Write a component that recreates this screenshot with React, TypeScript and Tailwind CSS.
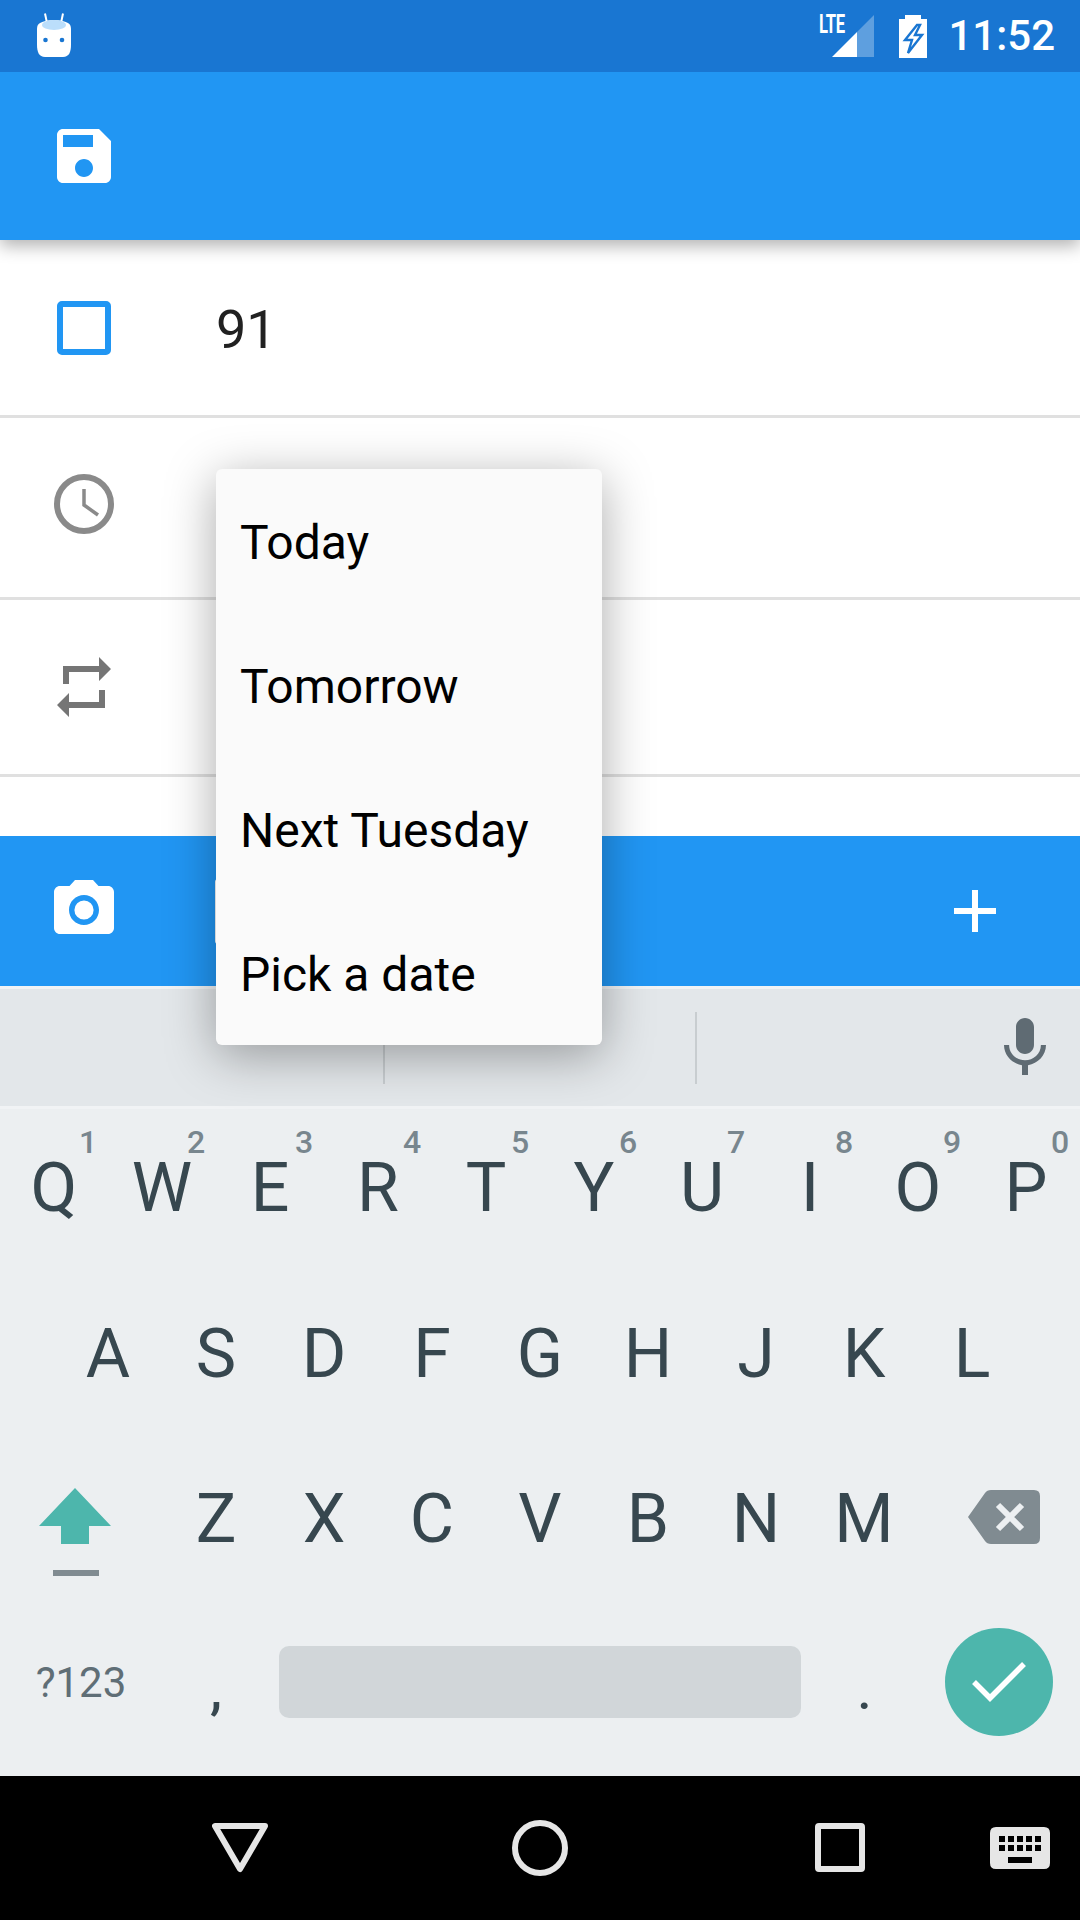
import React from 'react';

const topRow = [
  ['Q', '1'], ['W', '2'], ['E', '3'], ['R', '4'], ['T', '5'],
  ['Y', '6'], ['U', '7'], ['I', '8'], ['O', '9'], ['P', '0'],
];
const homeRow = ['A', 'S', 'D', 'F', 'G', 'H', 'J', 'K', 'L'];
const bottomRow = ['Z', 'X', 'C', 'V', 'B', 'N', 'M'];
const menuItems = ['Today', 'Tomorrow', 'Next Tuesday', 'Pick a date'];

function StatusBar() {
  return (
    <div className="relative z-20 flex h-[72px] items-center bg-[#1976D2] text-white">
      {/* Bot notification icon */}
      <svg width="34" height="44" viewBox="0 0 34 44" className="ml-[37px] mt-[-2px]">
        <path d="M8 0.5 L10 10 M26 0.5 L24 10" stroke="#fff" strokeWidth="2" />
        <path d="M3 10 C10 6 24 6 31 10 C34 12 34 14 34 18 L34 32 C34 39 32 44 26 44 L8 44 C2 44 0 39 0 32 L0 18 C0 14 0 12 3 10 Z" fill="#fff" />
        <ellipse cx="17" cy="12" rx="12" ry="5" fill="#BBDEFB" />
        <circle cx="8.5" cy="27" r="2.3" fill="#1976D2" />
        <circle cx="25" cy="27" r="2.3" fill="#1976D2" />
      </svg>
      <div className="ml-auto flex items-center">
        <div className="relative h-[72px] w-[55px]">
          <span className="absolute left-0 top-[10px] origin-left scale-x-[0.64] text-[26px] font-bold leading-[28px] tracking-tight">LTE</span>
          <svg width="42" height="42" viewBox="0 0 42 42" className="absolute left-[13px] top-[15px]">
            <path d="M25 17 L42 0 L42 42 L25 42 Z" fill="#fff" fillOpacity="0.3" />
            <path d="M0 42 L25 17 L25 42 Z" fill="#fff" />
          </svg>
        </div>
        <svg width="28" height="43" viewBox="0 0 28 43" className="ml-[25px]">
          <path d="M6 0 H22 V4 H28 V43 H0 V4 H6 Z" fill="#fff" />
          <path d="M18 10 L6 25 L13 25 L9 38 L23 20 L16 20 L21 10 Z" fill="#fff" stroke="#1976D2" strokeWidth="2.4" />
        </svg>
        <span className="ml-[21px] mr-[25px] text-[42px] font-medium leading-[72px]">11:52</span>
      </div>
    </div>
  );
}

function FormRow({ icon, children, height }: { icon: React.ReactNode; children?: React.ReactNode; height: string }) {
  return (
    <div className={`flex items-center border-b-[3px] border-[#E0E0E0] ${height}`}>
      <div className="ml-[48px] h-[72px] w-[72px]">{icon}</div>
      {children}
    </div>
  );
}

function Key({ label, hint }: { label: string; hint?: string }) {
  return (
    <div className="relative flex items-center justify-center pt-[4px] text-[68px] leading-none text-[#37474F]">
      {label}
      {hint && (
        <span className="absolute left-[79px] top-[17px] text-[32px] font-medium leading-none text-[#78868E]">{hint}</span>
      )}
    </div>
  );
}

function Keyboard() {
  return (
    <div className="flex h-[667px] flex-col bg-[#ECEFF1]">
      <div className="grid h-[154px] grid-cols-10">
        {topRow.map(([label, hint]) => (
          <Key key={label} label={label} hint={hint} />
        ))}
      </div>
      <div className="mt-[6px] grid h-[165px] grid-cols-9 px-[54px]">
        {homeRow.map((k) => (
          <Key key={k} label={k} />
        ))}
      </div>
      <div className="flex h-[165px]">
        <div className="relative w-[162px]">
          <svg width="72" height="56" viewBox="0 0 72 56" className="absolute left-[39px] top-[54px]">
            <path d="M36 0 L72 38 L50 38 L50 56 L22 56 L22 38 L0 38 Z" fill="#4DB6AC" />
          </svg>
          <div className="absolute left-[53px] top-[136px] h-[6px] w-[46px] bg-[#808B91]" />
        </div>
        <div className="grid w-[756px] grid-cols-7">
          {bottomRow.map((k) => (
            <Key key={k} label={k} />
          ))}
        </div>
        <div className="flex flex-1 items-center pl-[50px]">
          <svg width="72" height="54" viewBox="0 0 72 54">
            <path d="M0 27 L17 3 Q19 0 23 0 L66 0 Q72 0 72 6 L72 48 Q72 54 66 54 L23 54 Q19 54 17 51 Z" fill="#808B91" />
            <path d="M30 15 L54 39 M54 15 L30 39" stroke="#ECEFF1" strokeWidth="6" />
          </svg>
        </div>
      </div>
      <div className="flex h-[165px] items-center">
        <div className="w-[162px] pt-[2px] text-center text-[42px] leading-none text-[#5F6E76]">?123</div>
        <div className="w-[108px] pt-[16px] text-center text-[54px] font-medium leading-none text-[#37474F]">,</div>
        <div className="ml-[9px] h-[72px] w-[522px] rounded-[10px] bg-[#D1D6D9]" />
        <div className="w-[127px] pt-[20px] text-center text-[50px] font-medium leading-none text-[#37474F]">.</div>
        <div className="ml-[17px] flex h-[108px] w-[108px] items-center justify-center rounded-full bg-[#4DB6AC]">
          <svg width="56" height="44" viewBox="0 0 56 44">
            <path d="M3 22 L19 38 L53 4" fill="none" stroke="#fff" strokeWidth="5.5" />
          </svg>
        </div>
      </div>
    </div>
  );
}

function NavBar() {
  return (
    <div className="relative h-[144px] bg-black">
      <svg width="56" height="50" viewBox="0 0 56 50" className="absolute left-[212px] top-[47px]">
        <path d="M3 3 H53 L28 46 Z" fill="none" stroke="#E6E6E6" strokeWidth="6" strokeLinejoin="round" />
      </svg>
      <div className="absolute left-[512px] top-[44px] h-[56px] w-[56px] rounded-full border-[6px] border-[#E6E6E6]" />
      <div className="absolute left-[815px] top-[47px] h-[49px] w-[50px] rounded-[4px] border-[6px] border-[#E6E6E6]" />
      <svg width="60" height="42" viewBox="0 0 60 42" className="absolute left-[990px] top-[51px]">
        <path
          fillRule="evenodd"
          fill="#E6E6E6"
          d="M6 0 H54 Q60 0 60 6 V36 Q60 42 54 42 H6 Q0 42 0 36 V6 Q0 0 6 0 Z M9 9 V15 H15 V9 Z M18 9 V15 H24 V9 Z M27 9 V15 H33 V9 Z M36 9 V15 H42 V9 Z M45 9 V15 H51 V9 Z M9 18 V24 H15 V18 Z M18 18 V24 H24 V18 Z M27 18 V24 H33 V18 Z M36 18 V24 H42 V18 Z M45 18 V24 H51 V18 Z M18 30 V36 H42 V30 Z"
        />
      </svg>
    </div>
  );
}

export default function App() {
  return (
    <div className="relative flex h-[1920px] w-[1080px] flex-col overflow-hidden bg-white font-['Roboto',sans-serif]">
      <StatusBar />

      {/* Toolbar */}
      <div className="relative z-10 flex h-[168px] items-center bg-[#2196F3] pl-[48px] shadow-[0_6px_16px_rgba(0,0,0,0.3)]">
        <svg width="72" height="72" viewBox="0 0 24 24" fill="#fff">
          <path d="M17 3H5c-1.11 0-2 .9-2 2v14c0 1.1.89 2 2 2h14c1.1 0 2-.9 2-2V7l-4-4zm-5 16c-1.66 0-3-1.34-3-3s1.34-3 3-3 3 1.34 3 3-1.34 3-3 3zm3-10H5V5h10v4z" />
        </svg>
      </div>

      {/* Form */}
      <FormRow
        height="h-[178px]"
        icon={<div className="ml-[9px] mt-[9px] h-[54px] w-[54px] rounded-[5px] border-[6px] border-[#2196F3]" />}
      >
        <span className="ml-[96px] pt-[5px] text-[54px] leading-none text-[#212121]">91</span>
      </FormRow>
      <FormRow
        height="h-[182px]"
        icon={
          <svg width="72" height="72" viewBox="0 0 72 72" className="mt-[-4px]">
            <circle cx="36" cy="36" r="27" fill="none" stroke="#8A8A8A" strokeWidth="6" />
            <path d="M36 21 V37 L50 47" fill="none" stroke="#8A8A8A" strokeWidth="3.5" />
          </svg>
        }
      />
      <FormRow
        height="h-[177px]"
        icon={
          <svg width="72" height="72" viewBox="0 0 24 24" fill="#757575">
            <path d="M7 7h10v3l4-4-4-4v3H5v6h2V7zm10 10H7v-3l-4 4 4 4v-3h12v-6h-2v4z" />
          </svg>
        }
      />
      <div className="h-[59px]" />

      {/* Attachment bar */}
      <div className="flex h-[150px] items-center bg-[#2196F3] pl-[48px]">
        <svg width="72" height="72" viewBox="0 0 24 24" fill="#fff" className="mt-[-2px] shrink-0">
          <path d="M12 15.2a3.2 3.2 0 1 0 0-6.4 3.2 3.2 0 0 0 0 6.4z" />
          <path d="M9 2L7.17 4H4c-1.1 0-2 .9-2 2v12c0 1.1.9 2 2 2h16c1.1 0 2-.9 2-2V6c0-1.1-.9-2-2-2h-3.17L15 2H9zm3 15c-2.76 0-5-2.24-5-5s2.24-5 5-5 5 2.24 5 5-2.24 5-5 5z" />
        </svg>
        <div className="ml-[95px] h-[65px] w-[200px] shrink-0 rounded-[3px] bg-white" />
        <svg width="44" height="44" viewBox="0 0 44 44" className="ml-[538px] shrink-0">
          <path d="M22 1 V43 M1 22 H43" stroke="#fff" strokeWidth="6" />
        </svg>
      </div>
      <div className="h-[3px] bg-[#F1F3F5]" />

      {/* Suggestion strip */}
      <div className="flex h-[117px] items-center bg-[#E3E7EA]">
        <div className="ml-[383px] h-[72px] w-[2px] bg-[#C8CDD0]" />
        <div className="ml-[310px] h-[72px] w-[2px] bg-[#C8CDD0]" />
        <svg width="72" height="72" viewBox="0 0 24 24" fill="#5F6B73" className="ml-[292px]">
          <path d="M12 14c1.66 0 2.99-1.34 2.99-3L15 5c0-1.66-1.34-3-3-3S9 3.34 9 5v6c0 1.66 1.34 3 3 3zm5.3-3c0 3-2.54 5.1-5.3 5.1S6.7 14 6.7 11H5c0 3.41 2.72 6.23 6 6.72V21h2v-3.28c3.28-.48 6-3.3 6-6.72h-1.7z" />
        </svg>
      </div>
      <div className="h-[3px] bg-[#F1F3F5]" />

      <Keyboard />
      <NavBar />

      {/* Date popup menu */}
      <div className="absolute left-[216px] top-[469px] z-20 w-[386px] rounded-[6px] bg-[#FAFAFA] shadow-[0_10px_50px_rgba(0,0,0,0.34)]">
        {menuItems.map((item) => (
          <div key={item} className="flex h-[144px] items-center pl-[24px] pt-[4px] text-[48px] leading-none text-black">
            {item}
          </div>
        ))}
      </div>
    </div>
  );
}
